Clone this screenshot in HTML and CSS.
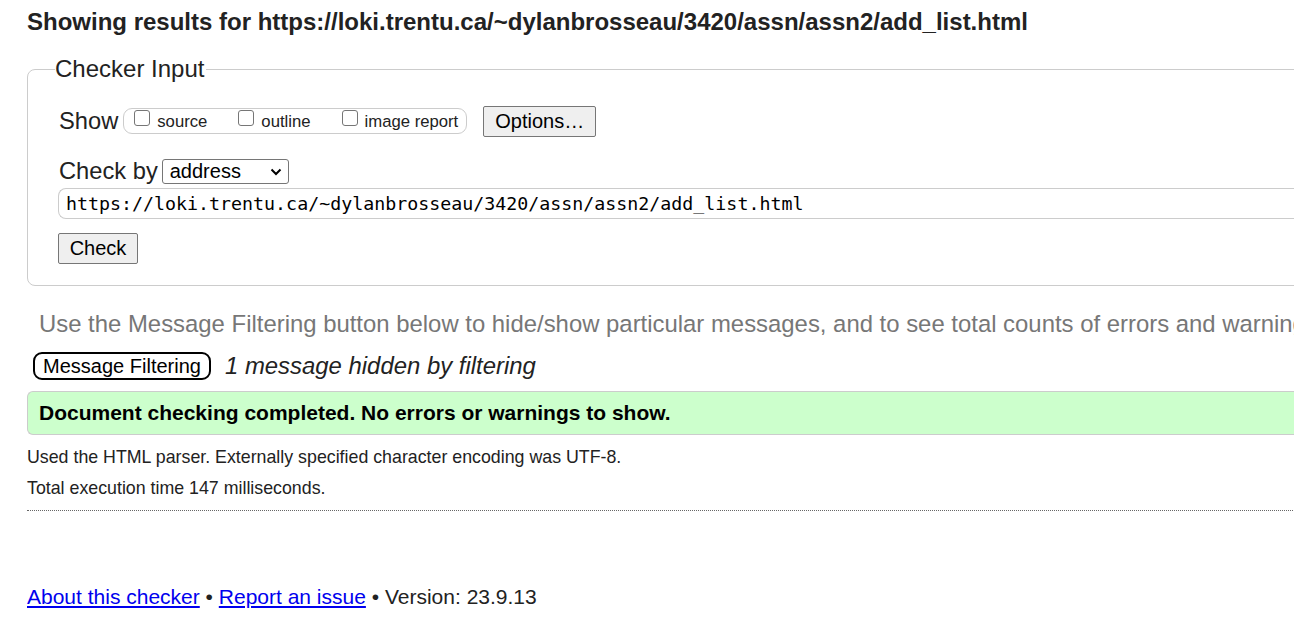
FILE: index.html
```html
<!DOCTYPE html>
<html lang="en">
<head>
<meta charset="utf-8">
<title>Showing results for https://loki.trentu.ca/~dylanbrosseau/3420/assn/assn2/add_list.html - Nu Html Checker</title>
<link rel="stylesheet" href="styles.css">
</head>
<body>
<div class="page">
  <h2 class="title">Showing results for https://loki.trentu.ca/~dylanbrosseau/3420/assn/assn2/add_list.html</h2>

  <fieldset class="checker">
    <legend class="legend">Checker Input</legend>
    <div class="row show-row">
      <span class="lbl">Show</span>
      <span class="opts">
        <label class="opt"><span class="box"></span>source</label>
        <label class="opt"><span class="box"></span>outline</label>
        <label class="opt"><span class="box"></span>image report</label>
      </span>
      <span class="btn options">Options…</span>
    </div>
    <div class="row by-row">
      <span class="lbl">Check by</span>
      <span class="select">address
        <svg class="chev" width="12" height="8" viewBox="0 0 12 8"><path d="M1.5 1.5 L6 6 L10.5 1.5" fill="none" stroke="#000" stroke-width="2"/></svg>
      </span>
    </div>
    <div class="url">https://loki.trentu.ca/~dylanbrosseau/3420/assn/assn2/add_list.html</div>
    <span class="btn check">Check</span>
  </fieldset>

  <p class="hint">Use the Message Filtering button below to hide/show particular messages, and to see total counts of errors and warnings.</p>
  <div class="filter-row">
    <span class="filter-btn">Message Filtering</span>
    <em class="hidden-note">1 message hidden by filtering</em>
  </div>

  <div class="success">Document checking completed. No errors or warnings to show.</div>

  <p class="stats first">Used the HTML parser. Externally specified character encoding was UTF-8.</p>
  <p class="stats">Total execution time 147 milliseconds.</p>

  <div class="footer">
    <a href="#">About this checker</a> • <a href="#">Report an issue</a> • Version: 23.9.13
  </div>
</div>
</body>
</html>
```

FILE: styles.css
```css
html, body {
  margin: 0;
  padding: 0;
  overflow: hidden;
  background: #fff;
}
body {
  font-family: "Liberation Sans", Arial, sans-serif;
  color: #222;
}
.page {
  width: 1420px;
  padding: 0 0 0 27px;
}
.title {
  margin: 0;
  padding-top: 8px;
  font-size: 24px;
  line-height: 28px;
  font-weight: bold;
  color: #222;
}
.checker {
  margin: 19px 0 0 0;
  padding: 6px 0 21px 30px;
  border: 1px solid #ccc;
  border-radius: 8px;
  min-width: 0;
}
.legend {
  padding: 0 2px 0 0;
  margin-left: -3px;
  font-size: 24px;
  line-height: 28px;
  color: #222;
}
.row {
  display: flex;
  align-items: center;
}
.show-row {
  height: 32px;
  margin-top: 16px;
}
.lbl {
  font-size: 23.7px;
  color: #222;
  margin-left: 1px;
}
.opts {
  display: flex;
  align-items: flex-start;
  margin-left: 5px;
  height: 26px;
  box-sizing: border-box;
  padding: 0 8px 0 10px;
  border: 1px solid #ccc;
  border-radius: 9px;
  gap: 31px;
}
.opt {
  display: flex;
  align-items: flex-start;
  font-size: 16.7px;
  line-height: 20px;
  color: #222;
  padding-top: 3px;
}
.box {
  width: 16px;
  height: 16px;
  border: 1px solid #767676;
  border-radius: 3px;
  box-sizing: border-box;
  margin-right: 7px;
  margin-top: -2px;
}
.btn {
  display: inline-flex;
  align-items: center;
  justify-content: center;
  background: #efefef;
  border: 1px solid #767676;
  border-radius: 2px;
  font-size: 20px;
  color: #000;
  box-sizing: border-box;
}
.options {
  margin-left: 16px;
  width: 113px;
  height: 31px;
}
.by-row {
  margin-top: 21px;
  height: 26px;
}
.select {
  display: inline-flex;
  align-items: center;
  justify-content: space-between;
  margin-left: 4px;
  width: 127px;
  height: 25px;
  box-sizing: border-box;
  border: 1px solid #767676;
  border-radius: 3px;
  padding: 0 6px 0 7px;
  font-size: 20px;
  color: #000;
}
.chev { margin-top: 1px; }
.url {
  margin-top: 4px;
  height: 31px;
  box-sizing: border-box;
  border: 1px solid #ccc;
  border-right: none;
  border-radius: 8px 0 0 8px;
  padding: 0 0 0 7px;
  display: flex;
  align-items: center;
  font-family: "DejaVu Sans Mono", "Liberation Mono", monospace;
  font-size: 18.3px;
  color: #000;
}
.check {
  margin-top: 14px;
  width: 80px;
  height: 31px;
}
.hint {
  margin: 24px 0 0 12px;
  font-size: 23.9px;
  line-height: 28px;
  color: #777;
  white-space: nowrap;
}
.filter-row {
  display: flex;
  align-items: center;
  height: 28px;
  margin-top: 14px;
  margin-left: 6px;
}
.filter-btn {
  display: inline-flex;
  align-items: center;
  justify-content: center;
  width: 178px;
  height: 28px;
  box-sizing: border-box;
  border: 2px solid #000;
  border-radius: 9px;
  font-size: 20px;
  color: #000;
}
.hidden-note {
  margin-left: 14px;
  font-size: 23.9px;
  color: #222;
}
.success {
  margin-top: 11px;
  height: 44px;
  box-sizing: border-box;
  background: #ccffcc;
  border: 1px solid #ccc;
  border-right: none;
  border-radius: 6px 0 0 6px;
  padding-left: 11px;
  display: flex;
  align-items: center;
  font-weight: bold;
  font-size: 21px;
  color: #000;
}
.stats {
  margin: 0;
  font-size: 17.8px;
  line-height: 31px;
  color: #222;
}
.stats.first { margin-top: 7px; }
.footer {
  margin-top: 6px;
  border-top: 1px dotted #666;
  padding-top: 74px;
  font-size: 21px;
  line-height: 24px;
  color: #222;
}
.footer a {
  color: #00e;
  text-decoration: underline;
}
```
